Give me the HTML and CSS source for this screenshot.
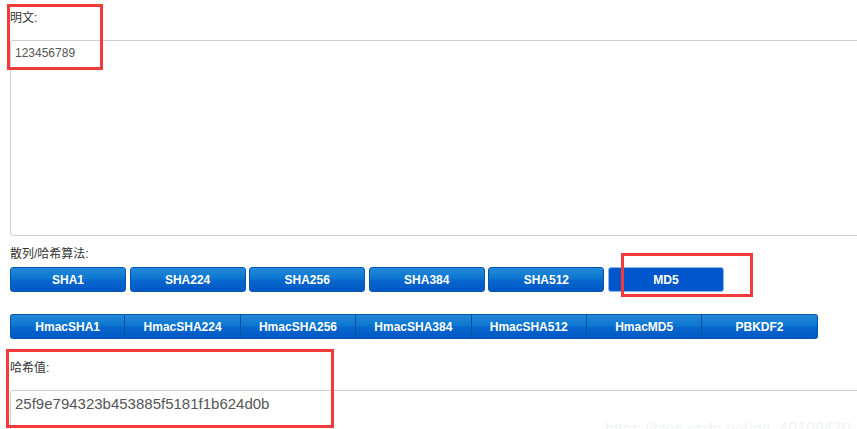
FILE: index.html
```html
<!DOCTYPE html>
<html lang="zh">
<head>
<meta charset="utf-8">
<title>散列/哈希算法</title>
<link rel="stylesheet" href="styles.css">
</head>
<body>
<div class="page">
  <div class="label first">明文:</div>
  <div class="textarea">123456789</div>

  <div class="label algo">散列/哈希算法:</div>
  <div class="row-sep">
    <button class="btn">SHA1</button>
    <button class="btn">SHA224</button>
    <button class="btn">SHA256</button>
    <button class="btn">SHA384</button>
    <button class="btn">SHA512</button>
    <button class="btn active">MD5</button>
  </div>

  <div class="row-group">
    <button class="gbtn">HmacSHA1</button>
    <button class="gbtn">HmacSHA224</button>
    <button class="gbtn">HmacSHA256</button>
    <button class="gbtn">HmacSHA384</button>
    <button class="gbtn">HmacSHA512</button>
    <button class="gbtn">HmacMD5</button>
    <button class="gbtn">PBKDF2</button>
  </div>

  <div class="label result">哈希值:</div>
  <div class="output">25f9e794323b453885f5181f1b624d0b</div>
</div>

<div class="mark mark-plain"></div>
<div class="mark mark-md5"></div>
<div class="mark mark-hash"></div>
<div class="watermark">https://blog.csdn.net/qq_40109470</div>
</body>
</html>
```

FILE: styles.css
```css
html, body {
  margin: 0;
  padding: 0;
  background: #fff;
  overflow: hidden;
  width: 857px;
  height: 429px;
}

body {
  position: relative;
  font-family: "Liberation Sans", Arial, "Noto Sans CJK SC", sans-serif;
}

.page {
  padding-left: 10px;
}

.label {
  font-family: "Liberation Sans", "Noto Sans CJK SC", sans-serif;
  font-size: 12px;
  line-height: 16px;
  height: 16px;
  color: #333;
}

.label.first { padding-top: 10px; }
.label.algo { margin-top: 10px; }
.label.result { margin-top: 21px; }

.textarea {
  margin-top: 14px;
  width: 860px;
  height: 196px;
  box-sizing: border-box;
  border: 1px solid #cfcfcf;
  border-radius: 3px;
  padding: 4px 4px;
  font-size: 12px;
  line-height: 16px;
  color: #555;
}

.row-sep {
  margin-top: 5px;
  display: grid;
  grid-template-columns: repeat(6, 116px);
  column-gap: 3.6px;
}

.btn, .gbtn {
  height: 25px;
  padding: 0;
  margin: 0;
  font-family: "Liberation Sans", Arial, sans-serif;
  font-size: 12px;
  font-weight: bold;
  color: #fff;
  cursor: pointer;
  background: linear-gradient(to bottom, #2389d8 0%, #0c76d0 45%, #0766cc 55%, #0058c6 100%);
  border: 1px solid #0757b0;
}

.btn {
  border-radius: 3px;
}

.btn.active {
  background: #0057cc;
  border: 1px solid #8ab8ef;
}

.row-group {
  margin-top: 22px;
  display: grid;
  grid-template-columns: repeat(7, 115.4px);
}

.gbtn {
  border-radius: 0;
  border-left-width: 0;
  border-right: 1px solid #0650a0;
}

.gbtn:first-child {
  border-left-width: 1px;
  border-radius: 3px 0 0 3px;
}

.gbtn:last-child {
  border-radius: 0 3px 3px 0;
  border-right: 1px solid #0757b0;
}

.output {
  margin-top: 14px;
  width: 860px;
  height: 60px;
  box-sizing: border-box;
  border: 1px solid #cfcfcf;
  border-radius: 3px;
  padding: 3px 4px;
  font-size: 15px;
  line-height: 20px;
  color: #555;
}

.mark {
  position: absolute;
  border: 3px solid #f23c3c;
  box-sizing: border-box;
}

.mark-plain { left: 7px; top: 4px; width: 96px; height: 66px; }
.mark-md5 { left: 621px; top: 253px; width: 132px; height: 44px; }
.mark-hash { left: 6px; top: 349px; width: 328px; height: 79px; }

.watermark {
  position: absolute;
  left: 605px;
  top: 419px;
  font-family: "Liberation Sans", Arial, sans-serif;
  font-size: 16px;
  line-height: 20px;
  color: #f1f4f6;
  white-space: nowrap;
}
```
